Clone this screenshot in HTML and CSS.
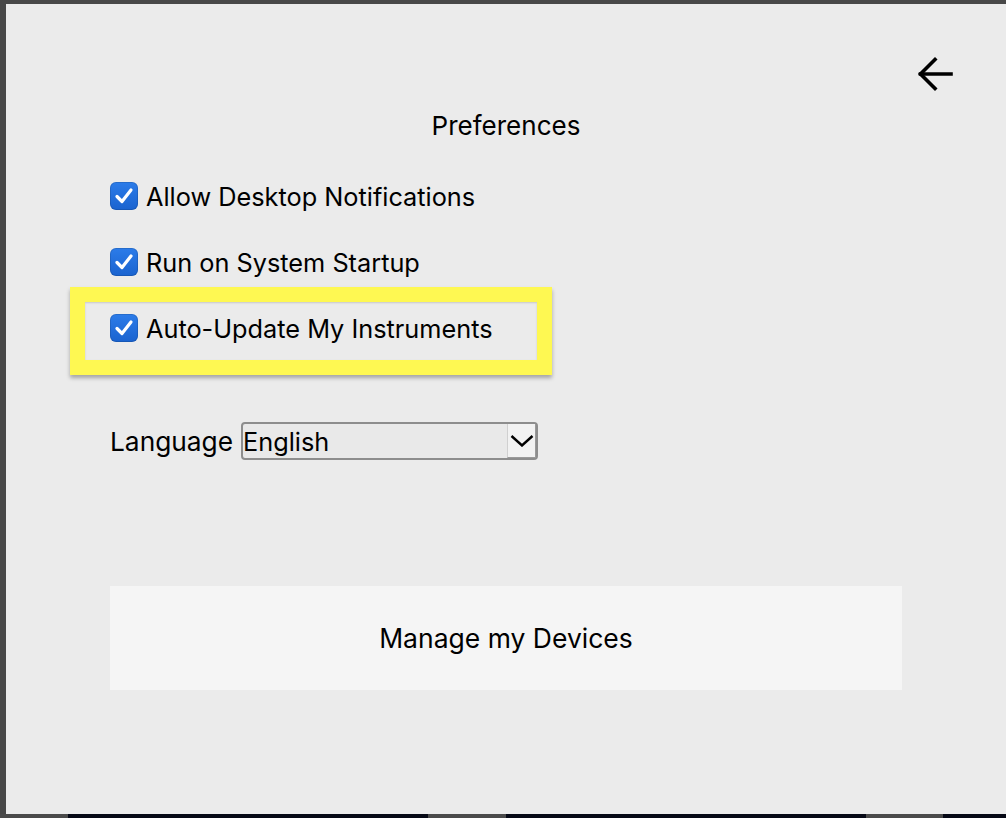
FILE: index.html
```html
<!DOCTYPE html>
<html lang="en">
<head>
<meta charset="utf-8">
<title>Preferences</title>
<link rel="stylesheet" href="styles.css">
</head>
<body>
<div class="screen">
  <main class="window">
    <header class="topbar">
      <button class="back" aria-label="Back">
        <svg width="36" height="36" viewBox="0 0 36 36" fill="none" stroke="#000" stroke-width="3.6" stroke-linecap="square">
          <path d="M3.5 18 H34"/>
          <path d="M18 3.5 L3.5 18 L18 32.5" stroke-linejoin="miter"/>
        </svg>
      </button>
    </header>
    <h1 class="title">Preferences</h1>
    <div class="options">
      <label class="option"><span class="box"><svg viewBox="0 0 28 28" width="28" height="28"><path d="M7 14.5 L12 19.5 L21 8" fill="none" stroke="#fff" stroke-width="3.2" stroke-linecap="round" stroke-linejoin="round"/></svg></span>Allow Desktop Notifications</label>
      <label class="option"><span class="box"><svg viewBox="0 0 28 28" width="28" height="28"><path d="M7 14.5 L12 19.5 L21 8" fill="none" stroke="#fff" stroke-width="3.2" stroke-linecap="round" stroke-linejoin="round"/></svg></span>Run on System Startup</label>
      <label class="option"><span class="box"><svg viewBox="0 0 28 28" width="28" height="28"><path d="M7 14.5 L12 19.5 L21 8" fill="none" stroke="#fff" stroke-width="3.2" stroke-linecap="round" stroke-linejoin="round"/></svg></span>Auto-Update My Instruments</label>
    </div>
    <div class="language">
      <span class="lang-label">Language</span>
      <div class="select">
        <span class="select-value">English</span>
        <span class="select-btn">
          <svg width="24" height="12" viewBox="0 0 24 12" fill="none" stroke="#000" stroke-width="2.4"><path d="M1.5 1 L12 10.5 L22.5 1"/></svg>
        </span>
      </div>
    </div>
    <button class="manage">Manage my Devices</button>
    <div class="highlight"></div>
  </main>
  <div class="strip">
    <span class="seg gray s1"></span>
    <span class="seg navy s2"></span>
    <span class="seg gray s3"></span>
    <span class="seg navy s4"></span>
    <span class="seg gray s5"></span>
    <span class="seg navy s6"></span>
  </div>
</div>
</body>
</html>
```

FILE: styles.css
```css
* { box-sizing: border-box; }
html, body { margin: 0; padding: 0; }
body {
  width: 1006px;
  height: 818px;
  overflow: hidden;
  background: #484848;
  font-family: Inter, "Liberation Sans", Arial, sans-serif;
  color: #000;
}
.screen {
  display: flex;
  flex-direction: column;
  height: 818px;
  padding-top: 4px;
}
.window {
  position: relative;
  margin-left: 6px;
  height: 810px;
  background: #ebebeb;
  padding: 0 104px;
  display: flex;
  flex-direction: column;
}
.topbar {
  display: flex;
  justify-content: flex-end;
  padding-top: 52px;
  margin-right: -51px;
}
.back {
  width: 36px;
  height: 36px;
  padding: 0;
  border: 0;
  background: transparent;
  display: block;
}
.back svg { display: block; }
.title {
  margin: 19px 0 0;
  font-size: 26px;
  line-height: 30px;
  font-weight: 400;
  text-align: center;
}
.options {
  margin-top: 41px;
  display: flex;
  flex-direction: column;
  gap: 38px;
}
.option {
  display: flex;
  align-items: center;
  gap: 8px;
  height: 28px;
  font-size: 25.3px;
}
.box {
  width: 28px;
  height: 28px;
  border-radius: 6px;
  background: linear-gradient(#2c7ce9, #1a63cf);
  box-shadow: inset 0 0 0 1px rgba(0,0,0,0.12);
  display: block;
  flex: none;
}
.box svg { display: block; }
.language {
  margin-top: 80px;
  display: flex;
  align-items: center;
  gap: 8px;
  height: 38px;
}
.lang-label {
  font-size: 26.3px;
}
.select {
  width: 297px;
  height: 38px;
  border: 2px solid #8d8d8d;
  border-radius: 4px;
  background: #e9e9e9;
  display: flex;
  align-items: stretch;
  font-size: 25.3px;
}
.select-value {
  flex: 1;
  display: flex;
  align-items: center;
  padding-left: 0;
}
.select-btn {
  width: 29px;
  display: flex;
  align-items: center;
  justify-content: center;
  background: #f2f2f2;
  border-left: 1px solid #d0d0d0;
  border-right: 1px solid #9a9a9a;
  border-bottom: 1px solid #9a9a9a;
}
.select-btn svg { display: block; }
.manage {
  margin-top: 126px;
  height: 104px;
  border: 0;
  background: #f5f5f5;
  font-family: inherit;
  font-size: 26.5px;
  color: #000;
}
.highlight {
  position: absolute;
  left: 64px;
  top: 283px;
  width: 482px;
  height: 88px;
  border: 15px solid #fef852;
  box-shadow: 0 3px 4px rgba(0,0,0,0.3), inset 0 1px 2px rgba(0,0,0,0.15);
  pointer-events: none;
}
.strip {
  display: flex;
  height: 4px;
}
.seg { display: block; height: 4px; }
.gray { background: #4a4a4a; }
.navy { background: #050815; }
.s1 { width: 68px; }
.s2 { width: 360px; }
.s3 { width: 78px; }
.s4 { width: 360px; }
.s5 { width: 77px; }
.s6 { flex: 1; }
```
